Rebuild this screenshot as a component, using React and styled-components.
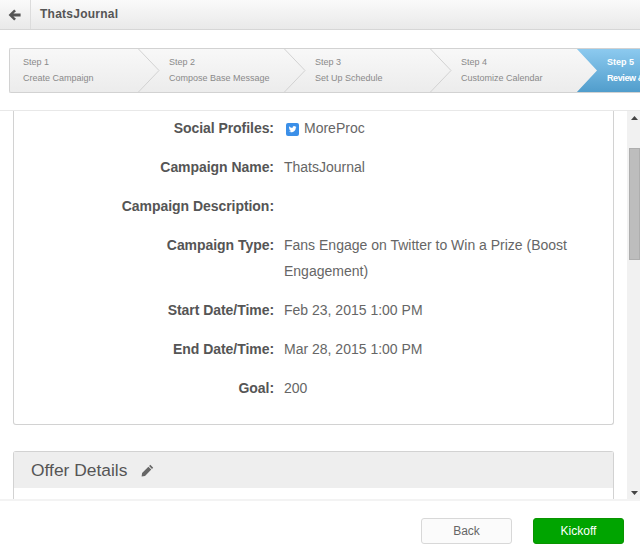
import React from "react";
import styled, { createGlobalStyle } from "styled-components";

const Global = createGlobalStyle`
  html, body { margin: 0; padding: 0; background: #fff; }
  body { font-family: "Liberation Sans", Arial, sans-serif; }
  * { box-sizing: border-box; }
`;

const Page = styled.div`
  width: 640px;
  height: 550px;
  display: flex;
  flex-direction: column;
  overflow: hidden;
  background: #fff;
`;

const TopBar = styled.header`
  height: 30px;
  flex: none;
  display: flex;
  align-items: stretch;
  background: linear-gradient(#fafafa, #e9e9e9);
  border-bottom: 1px solid #d6d6d6;
`;

const BackCell = styled.div`
  width: 31px;
  display: flex;
  align-items: center;
  justify-content: center;
  border-right: 1px solid #dcdcdc;
  padding-right: 2px;
`;

const Title = styled.div`
  padding-left: 9px;
  font-size: 12px;
  font-weight: bold;
  letter-spacing: 0.25px;
  line-height: 29px;
  color: #555;
`;

const StepperArea = styled.div`
  height: 81px;
  flex: none;
  padding: 18px 0 0 9px;
  border-bottom: 1px solid #e8e8e8;
`;

const Stepper = styled.div`
  position: relative;
  width: 640px;
  height: 45px;
  display: flex;
  overflow: hidden;
  background: linear-gradient(#f8f8f8, #ececec);
  border: 1px solid #d2d2d2;
  border-right: none;
  border-radius: 2px 0 0 2px;
`;

const Step = styled.div`
  width: ${(p) => (p.$first ? 129 : 146)}px;
  flex: none;
  padding: 5px 0 0 ${(p) => (p.$first ? 13 : 30)}px;
  font-size: 9px;
  line-height: 16px;
  color: ${(p) => (p.$active ? "#fff" : "#8a8a8a")};
  font-weight: ${(p) => (p.$active ? "bold" : "normal")};
  position: relative;
  z-index: 1;
  white-space: nowrap;
`;

const StepName = styled.div`
  letter-spacing: ${(p) => (p.$tight ? "-0.4px" : "0")};
`;

const ChevronLayer = styled.svg`
  position: absolute;
  left: -1px;
  top: -1px;
`;

const Body = styled.div`
  flex: 1;
  min-height: 0;
  display: flex;
`;

const ScrollPane = styled.div`
  flex: 1;
  min-width: 0;
  overflow: hidden;
  padding-left: 13px;
  padding-right: 13px;
`;

const SummaryPanel = styled.section`
  height: 314px;
  padding-top: 4px;
  border: 1px solid #d2d2d2;
  border-top: none;
  border-radius: 0 0 3px 3px;
`;

const Row = styled.div`
  display: flex;
  margin-bottom: 13px;
  font-size: 14px;
  line-height: 26px;
`;

const Label = styled.div`
  width: 260px;
  flex: none;
  text-align: right;
  font-weight: bold;
  letter-spacing: -0.05px;
  color: #555;
`;

const Value = styled.div`
  padding-left: 10px;
  flex: 1;
  color: #666;
  display: flex;
  align-items: center;
`;

const ValueText = styled.span`
  display: block;
`;

const TwitterBadge = styled.svg`
  margin: 2px 5px 0 2px;
  flex: none;
`;

const OfferPanel = styled.section`
  margin-top: 26px;
  height: 60px;
  border: 1px solid #d2d2d2;
  border-bottom: none;
  border-radius: 3px 3px 0 0;
`;

const OfferHeader = styled.div`
  height: 36px;
  display: flex;
  align-items: center;
  gap: 14px;
  padding-left: 17px;
  background: #eeeeee;
`;

const OfferTitle = styled.h3`
  margin: 0;
  font-size: 17.4px;
  font-weight: normal;
  color: #555;
`;

const ScrollBar = styled.div`
  width: 13px;
  flex: none;
  background: #f1f1f1;
  display: flex;
  flex-direction: column;
`;

const ScrollArrow = styled.div`
  height: 13px;
  flex: none;
  display: flex;
  align-items: center;
  justify-content: center;
  padding-left: 1px;
`;

const ScrollThumb = styled.div`
  width: 11px;
  height: 112px;
  margin: 24px 0 0 2px;
  background: #bdbdbd;
  border: 1px solid #aeaeae;
`;

const ScrollSpacer = styled.div`
  flex: 1;
`;

const Footer = styled.footer`
  height: 51px;
  flex: none;
  display: flex;
  justify-content: flex-end;
  align-items: flex-start;
  gap: 21px;
  padding: 17px 16px 0 0;
  border-top: 2px solid #f3f3f3;
`;

const Button = styled.button`
  width: 91px;
  height: 26px;
  padding: 0;
  font-family: inherit;
  font-size: 12px;
  border-radius: 3px;
  border: 1px solid ${(p) => (p.$primary ? "#0a9400" : "#d8d8d8")};
  background: ${(p) => (p.$primary ? "#00a400" : "#fbfbfb")};
  color: ${(p) => (p.$primary ? "#fff" : "#666")};
`;

const steps = [
  ["Step 1", "Create Campaign"],
  ["Step 2", "Compose Base Message"],
  ["Step 3", "Set Up Schedule"],
  ["Step 4", "Customize Calendar"],
  ["Step 5", "Review & Launch"],
];

const rows = [
  ["Campaign Name:", "ThatsJournal"],
  ["Campaign Description:", ""],
  ["Campaign Type:", "Fans Engage on Twitter to Win a Prize (Boost Engagement)"],
  ["Start Date/Time:", "Feb 23, 2015 1:00 PM"],
  ["End Date/Time:", "Mar 28, 2015 1:00 PM"],
  ["Goal:", "200"],
];

export default function App() {
  return (
    <Page>
      <Global />
      <TopBar>
        <BackCell>
          <svg width="13" height="12" viewBox="0 0 13 12">
            <path d="M6.2 .4 L8 2.2 L5.4 4.400 H12.600 V7.600 H5.400 L8 9.800 L6.200 11.600 L.6 6 Z" fill="#555" />
          </svg>
        </BackCell>
        <Title>ThatsJournal</Title>
      </TopBar>

      <StepperArea>
        <Stepper>
          <ChevronLayer width="640" height="45" viewBox="0 0 640 45">
            <defs>
              <linearGradient id="act" x1="0" y1="0" x2="0" y2="1">
                <stop offset="0" stopColor="#8ecbf0" />
                <stop offset="1" stopColor="#4f9ccb" />
              </linearGradient>
            </defs>
            <path d="M567 0 L588 22.5 L567 45 H640 V0 Z" fill="url(#act)" />
            {[129, 275, 421].map((x) => (
              <path key={x} d={`M${x} .5 L${x + 21} 22.5 L${x} 44.5`} fill="none" stroke="#d2d2d2" strokeWidth="1" />
            ))}
          </ChevronLayer>
          {steps.map(([num, name], i) => (
            <Step key={num} $first={i === 0} $active={i === 4}>
              <StepName>{num}</StepName>
              <StepName $tight={i === 4}>{name}</StepName>
            </Step>
          ))}
        </Stepper>
      </StepperArea>

      <Body>
        <ScrollPane>
          <SummaryPanel>
            <Row>
              <Label>Social Profiles:</Label>
              <Value>
                <TwitterBadge width="13" height="13" viewBox="0 0 13 13">
                  <rect width="13" height="13" rx="2" fill="#3b8fe8" />
                  <path
                    d="M10.4 3.9c-.3.1-.6.2-.9.2.3-.2.6-.5.7-.9-.3.2-.7.3-1 .4a1.6 1.6 0 0 0-2.7 1.4C5.200 4.900 4 4.300 3.200 3.300c-.4.700-.2 1.600.5 2.100-.3 0-.5-.1-.7-.2 0 .8.500 1.400 1.300 1.600-.2.100-.5.100-.7 0 .2.600.8 1.100 1.500 1.100-.7.500-1.500.8-2.400.7.7.5 1.600.7 2.500.7 3 0 4.700-2.500 4.600-4.800.3-.2.500-.4.600-.6z"
                    fill="#fff"
                  />
                </TwitterBadge>
                <ValueText>MoreProc</ValueText>
              </Value>
            </Row>
            {rows.map(([label, value]) => (
              <Row key={label}>
                <Label>{label}</Label>
                <Value>
                  <ValueText>{value}</ValueText>
                </Value>
              </Row>
            ))}
          </SummaryPanel>
          <OfferPanel>
            <OfferHeader>
              <OfferTitle>Offer Details</OfferTitle>
              <svg width="13" height="13" viewBox="0 0 13 13">
                <path d="M9.300 .8 L12.200 3.700 L11 4.900 L8.100 2 Z M7.400 2.700 L10.300 5.600 L4 11.900 L.6 12.400 L1.100 9 Z" fill="#666" />
              </svg>
            </OfferHeader>
          </OfferPanel>
        </ScrollPane>
        <ScrollBar>
          <ScrollArrow>
            <svg width="7" height="4" viewBox="0 0 7 4"><path d="M3.500 0 L7 4 H0 Z" fill="#444" /></svg>
          </ScrollArrow>
          <ScrollThumb />
          <ScrollSpacer />
          <ScrollArrow>
            <svg width="7" height="4" viewBox="0 0 7 4"><path d="M0 0 H7 L3.500 4 Z" fill="#444" /></svg>
          </ScrollArrow>
        </ScrollBar>
      </Body>

      <Footer>
        <Button>Back</Button>
        <Button $primary>Kickoff</Button>
      </Footer>
    </Page>
  );
}
